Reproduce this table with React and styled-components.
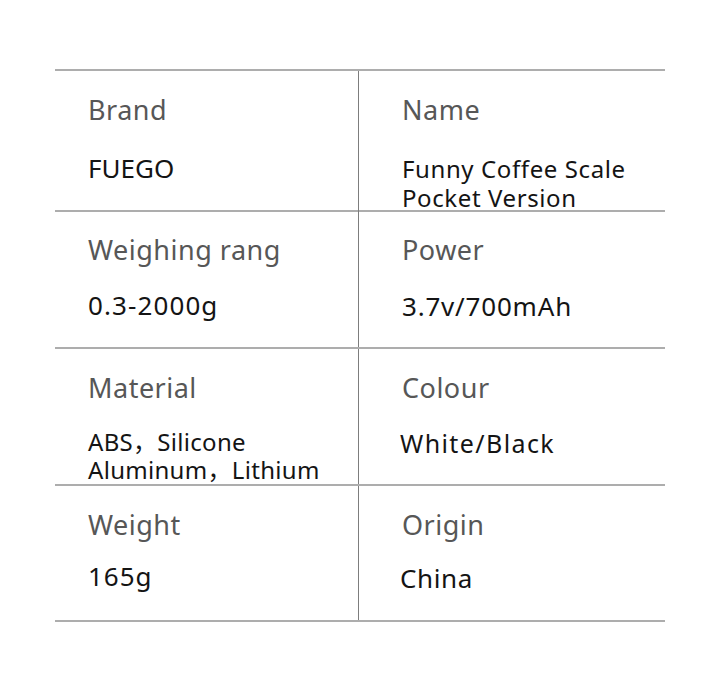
import styled, { createGlobalStyle } from "styled-components";

const GlobalStyle = createGlobalStyle`
    body {
        margin: 0;
        background: #ffffff;
        font-family: "Noto Sans", "Noto Sans CJK SC", sans-serif;
    }
`

const Page = styled.main`
    width: 720px;
    height: 683px;
    padding-top: 69px;
    box-sizing: border-box;
    display: flex;
    justify-content: center;
`

const Table = styled.section`
    width: 610px;
    border-top: 2px solid #adadad;
    display: flex;
    flex-direction: column;
`

const Row = styled.div`
    display: grid;
    grid-template-columns: 304px 306px;
    height: ${props => props.$height}px;
    border-bottom: 2px solid #adadad;
`

const Cell = styled.div`
    display: flex;
    flex-direction: column;
    padding-left: ${props => props.$indent}px;
    padding-top: ${props => props.$top}px;
    box-sizing: border-box;
    border-right: ${props => props.$divider ? "1px solid #7d7d7d" : "none"};
`

const Label = styled.span`
    font-size: 27px;
    line-height: 31px;
    letter-spacing: 0.5px;
    color: #575757;
`

const Value = styled.span`
    margin-top: ${props => props.$gap}px;
    margin-left: ${props => props.$shift || 0}px;
    font-size: ${props => props.$size}px;
    line-height: ${props => props.$lead}px;
    letter-spacing: ${props => props.$spacing || 0}px;
    color: #141414;
    white-space: pre-line;
`

const rows = [
    {
        height: 139,
        cells: [
            { label: "Brand", value: "FUEGO", top: 23, gap: 28, size: 26, lead: 31 },
            { label: "Name", value: "Funny Coffee Scale\nPocket Version", top: 23, gap: 29, size: 24, lead: 29, spacing: 0.6 },
        ],
    },
    {
        height: 135,
        cells: [
            { label: "Weighing rang", value: "0.3-2000g", top: 22, gap: 25, size: 26, lead: 31, spacing: 1.1 },
            { label: "Power", value: "3.7v/700mAh", top: 22, gap: 26, size: 26, lead: 31, spacing: 0.8 },
        ],
    },
    {
        height: 135,
        cells: [
            { label: "Material", value: "ABS，Silicone\nAluminum，Lithium", top: 23, gap: 25, size: 24, lead: 28, spacing: 0.3 },
            { label: "Colour", value: "White/Black", top: 23, gap: 25, size: 25, lead: 30, spacing: 1.4, shift: -2 },
        ],
    },
    {
        height: 134,
        cells: [
            { label: "Weight", value: "165g", top: 22.5, gap: 21, size: 26, lead: 31, spacing: 1 },
            { label: "Origin", value: "China", top: 22.5, gap: 23, size: 26, lead: 31, spacing: 0.6, shift: -2 },
        ],
    },
]

const App = () => {
    return (
        <>
            <GlobalStyle />
            <Page>
                <Table>
                    {rows.map((row, i) => (
                        <Row key={i} $height={row.height}>
                            {row.cells.map((cell, j) => (
                                <Cell key={cell.label} $indent={j === 0 ? 33 : 43} $top={cell.top} $divider={j === 0}>
                                    <Label>{cell.label}</Label>
                                    <Value
                                        $gap={cell.gap}
                                        $size={cell.size}
                                        $lead={cell.lead}
                                        $spacing={cell.spacing}
                                        $shift={cell.shift}
                                    >
                                        {cell.value}
                                    </Value>
                                </Cell>
                            ))}
                        </Row>
                    ))}
                </Table>
            </Page>
        </>
    )
}

export default App
